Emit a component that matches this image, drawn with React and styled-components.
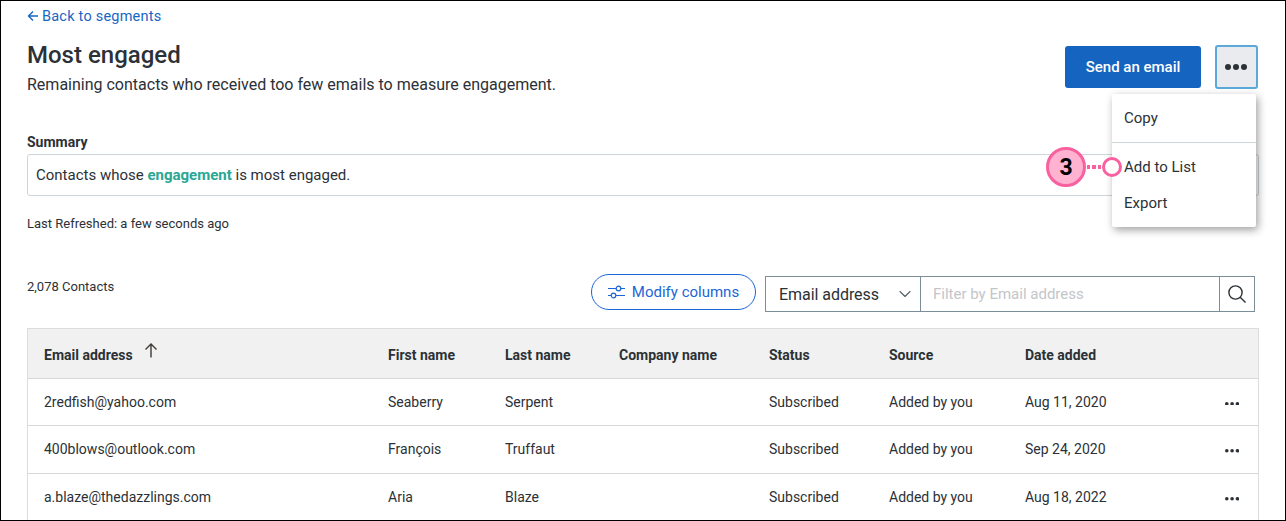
import React from "react";
import styled, { createGlobalStyle } from "styled-components";
import { ChevronDown } from "lucide-react";

const Global = createGlobalStyle`
  html, body { margin: 0; padding: 0; background: #fff; }
  body { font-family: Roboto, "Liberation Sans", sans-serif; color: #2b3136; }
`;

const Frame = styled.div`
  position: relative;
  box-sizing: border-box;
  width: 1286px;
  height: 521px;
  border: 1px solid #000;
  overflow: hidden;
  padding: 0 26px;
  background: #fff;
`;

const BackLink = styled.a`
  display: flex;
  align-items: center;
  height: 30px;
  color: #1866c4;
  font-size: 14.5px;
  letter-spacing: 0.22px;
  gap: 3px;
`;

const Header = styled.div`
  display: flex;
  justify-content: space-between;
  align-items: flex-start;
  height: 84px;
`;

const Heading = styled.h1`
  margin: 8px 0 0;
  font-size: 24px;
  line-height: 32px;
  font-weight: 500;
  color: #2b3136;
`;

const Lead = styled.p`
  margin: 3px 0 0;
  font-size: 16px;
  line-height: 22px;
`;

const Actions = styled.div`
  display: flex;
  gap: 14px;
  margin: 15px 1px 0 0;
`;

const SendButton = styled.button`
  width: 136px;
  height: 42px;
  border: 0;
  border-radius: 3px;
  background: #1565c0;
  color: #fff;
  font: 500 15px Roboto, sans-serif;
`;

const MoreButton = styled.button`
  box-sizing: border-box;
  display: grid;
  place-items: center;
  width: 43px;
  height: 44px;
  margin-top: -1px;
  padding: 0 1px 0 0;
  border: 2px solid #5aa9d8;
  border-radius: 3px;
  background: #e9ebee;
  color: #2b3136;
`;

const SummaryLabel = styled.div`
  margin-top: 18px;
  font-size: 14px;
  line-height: 18px;
  font-weight: 700;
`;

const SummaryBox = styled.div`
  box-sizing: border-box;
  display: flex;
  align-items: center;
  height: 42px;
  margin-top: 3px;
  padding-left: 8px;
  border: 1px solid #ccd5da;
  border-radius: 3px;
  font-size: 15px;
`;

const Term = styled.strong`
  color: #28a795;
  font-weight: 700;
`;

const Refreshed = styled.div`
  margin-top: 20px;
  font-size: 13px;
  line-height: 16px;
`;

const Toolbar = styled.div`
  display: flex;
  align-items: center;
  margin: 43px 0 0;
  height: 38px;
  padding-right: 4px;
`;

const Count = styled.div`
  flex: 1;
  margin-top: -15px;
  font-size: 13px;
`;

const ModifyButton = styled.button`
  box-sizing: border-box;
  display: flex;
  align-items: center;
  justify-content: center;
  gap: 7px;
  width: 165px;
  height: 36px;
  margin: -4px 9px 0 0;
  padding: 0;
  border: 1px solid #1a66d6;
  border-radius: 18px;
  background: #fff;
  color: #1a66d6;
  font: 400 15px Roboto, sans-serif;
`;

const FilterGroup = styled.div`
  box-sizing: border-box;
  display: flex;
  width: 490px;
  height: 36px;
  border: 1px solid #7b8e99;
`;

const SelectBox = styled.div`
  box-sizing: border-box;
  display: flex;
  align-items: center;
  justify-content: space-between;
  width: 155px;
  padding: 0 5px 0 13px;
  font-size: 16px;
  letter-spacing: -0.05px;
  border-right: 1px solid #7b8e99;
`;

const FilterText = styled.div`
  flex: 1;
  padding-left: 12px;
  align-self: center;
  font-size: 15px;
  color: #c3c6c9;
`;

const SearchBox = styled.div`
  display: grid;
  place-items: center;
  width: 34px;
  border-left: 1px solid #7b8e99;
`;

const Table = styled.div`
  margin-top: 15px;
  border: 1px solid #dcdcdc;
  border-bottom: 0;
`;

const Row = styled.div`
  display: grid;
  grid-template-columns: 344px 117px 114px 150px 120px 136px 1fr 52px;
  align-items: center;
  height: ${(p) => p.$height}px;
  box-sizing: border-box;
  padding: ${(p) => (p.$head ? "2px" : "0")} 0 0 16px;
  font-size: 14px;
  background: ${(p) => (p.$head ? "#f1f1f1" : "#fff")};
  font-weight: ${(p) => (p.$head ? 700 : 400)};
  border-bottom: 1px solid #d8d8d8;
  &:last-child { border-bottom: 0; }
`;

const SortCell = styled.div`
  display: flex;
  align-items: center;
  gap: 11px;
`;

const SortArrow = styled.svg`
  margin-top: -8px;
`;

const Dots = styled.svg`
  display: block;
  margin: ${(p) => p.$top}px auto 0;
  color: #2b3136;
`;

const Menu = styled.div`
  position: absolute;
  left: 1111px;
  top: 93px;
  box-sizing: border-box;
  width: 144px;
  height: 133px;
  background: #fff;
  border-radius: 2px;
  box-shadow: 2px 3px 9px rgba(0, 0, 0, 0.38);
  font-size: 15px;
`;

const MenuItem = styled.div`
  display: flex;
  align-items: center;
  height: ${(p) => p.$height}px;
  padding-left: 12px;
  ${(p) => p.$divided && "border-bottom: 1px solid #ccd5da;"}
`;

const Callout = styled.div`
  position: absolute;
  left: 1045px;
  top: 146px;
  display: flex;
  align-items: center;
`;

const Badge = styled.div`
  box-sizing: border-box;
  display: grid;
  place-items: center;
  width: 40px;
  height: 40px;
  border: 3px solid #f8609f;
  border-radius: 50%;
  background: #ffb3d1;
  color: #000;
  font: 700 23px Roboto, sans-serif;
`;

const Leader = styled.div`
  width: 15px;
  height: 4px;
  margin-left: 1px;
  background: repeating-linear-gradient(90deg, #f8609f 0 3.5px, transparent 3.5px 5.5px);
`;

const Ring = styled.div`
  box-sizing: border-box;
  width: 20px;
  height: 20px;
  border: 3.5px solid #f8609f;
  border-radius: 50%;
  background: #fff;
`;

const BackArrow = () => (
  <svg width="12" height="12" viewBox="0 0 12 12" fill="none" stroke="currentColor" strokeWidth="1.4">
    <path d="M11 6H1.5M6 1.5L1.5 6L6 10.5" />
  </svg>
);

const UpArrow = () => (
  <SortArrow width="14" height="15" viewBox="0 0 14 15" fill="none" stroke="#3d3a38" strokeWidth="1.4">
    <path d="M7 14.5V1.5M1.5 6.5L7 1L12.5 6.5" />
  </SortArrow>
);

const SliderIcon = () => (
  <svg width="17" height="14" viewBox="0 0 17 14" fill="none" stroke="currentColor" strokeWidth="1.2">
    <path d="M0 3.5H8M13 3.5H17M0 10.5H3M8 10.5H17" />
    <circle cx="10.5" cy="3.5" r="2.3" />
    <circle cx="5.5" cy="10.5" r="2.3" />
  </svg>
);

const SearchIcon = () => (
  <svg width="20" height="20" viewBox="0 0 20 20" fill="none" stroke="#2b3136" strokeWidth="1.4">
    <circle cx="8.5" cy="8.5" r="6.6" />
    <path d="M13.2 13.2L18.5 18.5" />
  </svg>
);

const ThreeDots = ({ gap, r, top = 0 }) => (
  <Dots $top={top} width={gap * 2 + r * 2} height={r * 2} viewBox={`0 0 ${gap * 2 + r * 2} ${r * 2}`} fill="currentColor">
    <circle cx={r} cy={r} r={r} />
    <circle cx={r + gap} cy={r} r={r} />
    <circle cx={r + gap * 2} cy={r} r={r} />
  </Dots>
);

const columns = ["First name", "Last name", "Company name", "Status", "Source", "Date added"];

const contacts = [
  ["2redfish@yahoo.com", "Seaberry", "Serpent", "", "Subscribed", "Added by you", "Aug 11, 2020"],
  ["400blows@outlook.com", "François", "Truffaut", "", "Subscribed", "Added by you", "Sep 24, 2020"],
  ["a.blaze@thedazzlings.com", "Aria", "Blaze", "", "Subscribed", "Added by you", "Aug 18, 2022"],
];

export default function App() {
  return (
    <>
      <Global />
      <Frame>
        <BackLink>
          <BackArrow />
          Back to segments
        </BackLink>
        <Header>
          <div>
            <Heading>Most engaged</Heading>
            <Lead>Remaining contacts who received too few emails to measure engagement.</Lead>
          </div>
          <Actions>
            <SendButton>Send an email</SendButton>
            <MoreButton>
              <ThreeDots gap={8} r={3} />
            </MoreButton>
          </Actions>
        </Header>
        <SummaryLabel>Summary</SummaryLabel>
        <SummaryBox>
          <span>
            Contacts whose <Term>engagement</Term> is most engaged.
          </span>
        </SummaryBox>
        <Refreshed>Last Refreshed: a few seconds ago</Refreshed>
        <Toolbar>
          <Count>2,078 Contacts</Count>
          <ModifyButton>
            <SliderIcon />
            Modify columns
          </ModifyButton>
          <FilterGroup>
            <SelectBox>
              Email address
              <ChevronDown size={20} strokeWidth={1.4} color="#55636c" />
            </SelectBox>
            <FilterText>Filter by Email address</FilterText>
            <SearchBox>
              <SearchIcon />
            </SearchBox>
          </FilterGroup>
        </Toolbar>
        <Table>
          <Row $head $height={50}>
            <SortCell>
              Email address
              <UpArrow />
            </SortCell>
            {columns.map((c) => (
              <div key={c}>{c}</div>
            ))}
          </Row>
          {contacts.map((c) => (
            <Row key={c[0]} $height={47.3}>
              {c.map((v, i) => (
                <div key={i}>{v}</div>
              ))}
              <ThreeDots gap={5.3} r={1.8} top={3} />
            </Row>
          ))}
        </Table>
        <Menu>
          <MenuItem $height={48} $divided>Copy</MenuItem>
          <MenuItem $height={47}>Add to List</MenuItem>
          <MenuItem $height={26}>Export</MenuItem>
        </Menu>
        <Callout>
          <Badge>3</Badge>
          <Leader />
          <Ring />
        </Callout>
      </Frame>
    </>
  );
}
